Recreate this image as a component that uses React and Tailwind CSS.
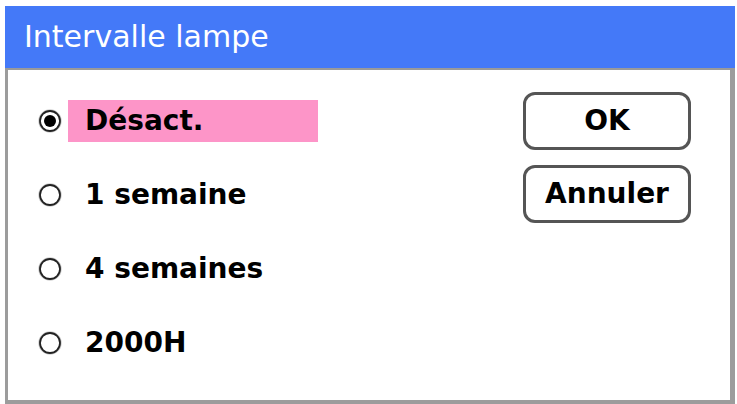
import React from "react";

const options = [
  { label: "Désact.", selected: true },
  { label: "1 semaine", selected: false },
  { label: "4 semaines", selected: false },
  { label: "2000H", selected: false },
];

function Radio({ selected }) {
  return (
    <svg width="24" height="24" viewBox="0 0 24 24" className="shrink-0">
      <circle cx="12" cy="12" r="11" fill="white" stroke="#cfcfcf" strokeWidth="1.5" />
      <circle cx="12" cy="12" r="10" fill="white" stroke="#222" strokeWidth="1.8" />
      {selected && <circle cx="12" cy="12" r="6" fill="#000" />}
    </svg>
  );
}

export default function App() {
  return (
    <div
      className="w-[737px] h-[404px] bg-white pl-[5px] pt-[6px] overflow-hidden"
      style={{ fontFamily: '"DejaVu Sans", sans-serif' }}
    >
      <div className="flex flex-col w-[730px] h-[398px]">
        {/* title bar */}
        <div className="h-[64px] shrink-0 bg-[#4479f8] border-b-2 border-[#9a9a9a] flex items-center pl-[19px]">
          <span className="text-white text-[30px] leading-none">Intervalle lampe</span>
        </div>

        {/* body */}
        <div className="flex-1 flex justify-between border-l-[3px] border-r-[5px] border-b-4 border-[#9c9c9c] bg-white">
          <div className="flex flex-col gap-[32px] pt-[30px] pl-[30px]">
            {options.map((o) => (
              <div key={o.label} className="flex items-center h-[42px]">
                <Radio selected={o.selected} />
                <div
                  className={
                    "ml-[6px] w-[250px] h-[42px] flex items-center pl-[17px] " +
                    (o.selected ? "bg-[#fd95c8]" : "")
                  }
                >
                  <span className="text-[28px] font-bold leading-none text-black">{o.label}</span>
                </div>
              </div>
            ))}
          </div>

          <div className="flex flex-col gap-[15px] pt-[22px] pr-[39px]">
            <button className="w-[168px] h-[58px] border-[3px] border-[#555] rounded-[12px] flex items-center justify-center text-[28px] font-bold leading-none text-black bg-white">
              OK
            </button>
            <button className="w-[168px] h-[58px] border-[3px] border-[#555] rounded-[12px] flex items-center justify-center text-[28px] font-bold leading-none text-black bg-white">
              Annuler
            </button>
          </div>
        </div>
      </div>
    </div>
  );
}
